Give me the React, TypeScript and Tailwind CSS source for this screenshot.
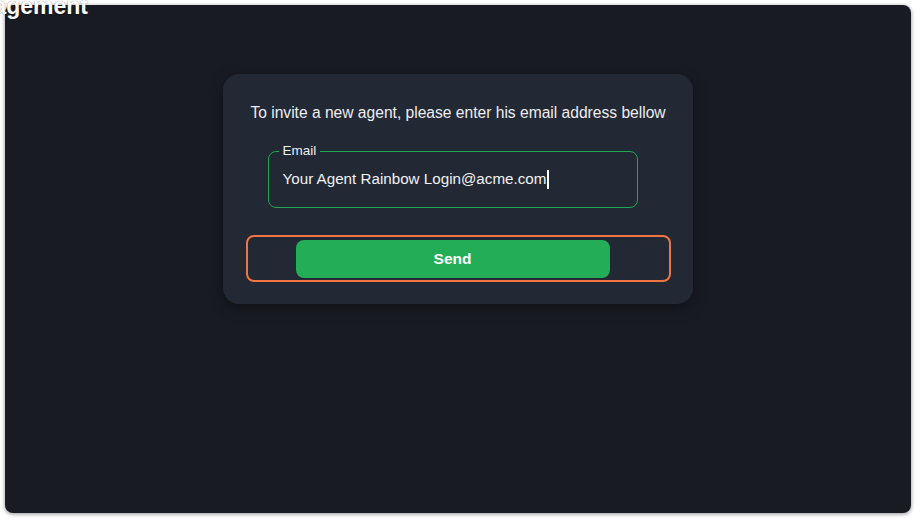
export default function App() {
  return (
    <div className="relative h-[526px] w-[924px] overflow-hidden bg-white font-['Liberation_Sans',Arial,sans-serif]">
      <div className="ml-[5px] mt-[5px] h-[508px] w-[906px] rounded-lg bg-[#181b22] shadow-[0_1px_4px_rgba(0,0,0,0.45)]">
        <div className="flex justify-center pt-[69px]">
          <div className="flex w-[470px] flex-col items-center rounded-2xl bg-[#222834] pb-[22px] pt-[27px] shadow-[0_4px_14px_rgba(0,0,0,0.35)]">
            <p className="text-[15.6px] text-[#eceef1]">
              To invite a new agent, please enter his email address bellow
            </p>
            <fieldset className="mr-[11px] mt-[20px] h-[64px] w-[370px] rounded-lg border border-[#1ea652] px-[10px]">
              <legend className="px-[4px] text-[13.5px] leading-[14px] text-[#eceef1]">Email</legend>
              <div className="ml-[4px] mt-[10px] flex items-center text-[15.2px] text-[#f1f2f4]">
                Your Agent Rainbow Login@acme.com
                <span className="ml-px inline-block h-[19px] w-[1.5px] bg-white" />
              </div>
            </fieldset>
            <div className="mt-[27px] flex h-[47px] w-[425px] items-center justify-center rounded-lg border-2 border-[#f27541]">
              <button className="mr-[11px] h-[38px] w-[314px] rounded-lg bg-[#22ad56] text-[15.5px] font-bold text-white">
                Send
              </button>
            </div>
          </div>
        </div>
      </div>
      <div className="absolute left-0 top-[-11px] flex w-[88px] justify-end whitespace-nowrap text-[23px] font-bold text-white [text-shadow:0_0_1px_rgba(0,0,0,0.6)]">
        Agent Management
      </div>
    </div>
  );
}
